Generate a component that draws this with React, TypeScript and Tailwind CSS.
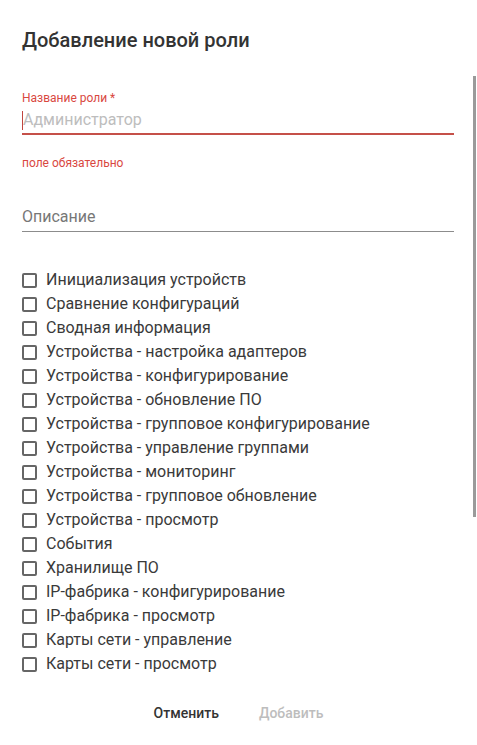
const permissions = [
  "Инициализация устройств",
  "Сравнение конфигураций",
  "Сводная информация",
  "Устройства - настройка адаптеров",
  "Устройства - конфигурирование",
  "Устройства - обновление ПО",
  "Устройства - групповое конфигурирование",
  "Устройства - управление группами",
  "Устройства - мониторинг",
  "Устройства - групповое обновление",
  "Устройства - просмотр",
  "События",
  "Хранилище ПО",
  "IP-фабрика - конфигурирование",
  "IP-фабрика - просмотр",
  "Карты сети - управление",
  "Карты сети - просмотр",
]

function CheckRow({ label }: { label: string }) {
  return (
    <label className="flex items-center h-[24px] cursor-pointer">
      <span className="w-[15px] h-[15px] border-2 border-[#666] rounded-[2px] shrink-0" />
      <span className="ml-[9px] text-[16px] leading-[24px] font-normal text-[#3a3a3a]">{label}</span>
    </label>
  )
}

export default function App() {
  return (
    <div className="relative w-[477px] h-[745px] bg-white overflow-hidden font-['Roboto',sans-serif]">
      {/* scroll thumb */}
      <div className="absolute left-[473px] top-[76px] w-[3px] h-[441px] bg-[#9a9a9a]" />

      <h2 className="pt-[26px] px-[22px] text-[20px] leading-[28px] font-medium text-[#333]">
        Добавление новой роли
      </h2>

      <div className="pl-[22px] pr-[23px]">
        <div className="mt-[36px]">
          <p className="text-[12px] leading-[16px] text-[#d9483f]">Название роли *</p>
          <div className="mt-[2px] pb-[1px] border-b-2 border-[#c55049] flex items-center">
            <span className="w-px h-[19px] bg-[#c0453f]" />
            <span className="text-[16px] leading-[24px] text-[#bdbdbd]">Администратор</span>
          </div>
          <p className="mt-[20px] text-[12px] leading-[16px] text-[#d9483f]">поле обязательно</p>
        </div>

        <div className="mt-[34px] pb-[2px] border-b border-[#8c8c8c]">
          <span className="text-[16px] leading-[24px] text-[#777]">Описание</span>
        </div>

        <div className="mt-[36px] flex flex-col">
          {permissions.map((p) => (
            <CheckRow key={p} label={p} />
          ))}
        </div>
      </div>

      <div className="mt-[19px] flex justify-center gap-[8px]">
        <button className="h-[36px] px-[16px] text-[14px] font-medium text-[#333]">Отменить</button>
        <button className="h-[36px] px-[16px] text-[14px] font-medium text-[#bdbdbd]" disabled>
          Добавить
        </button>
      </div>
    </div>
  )
}
